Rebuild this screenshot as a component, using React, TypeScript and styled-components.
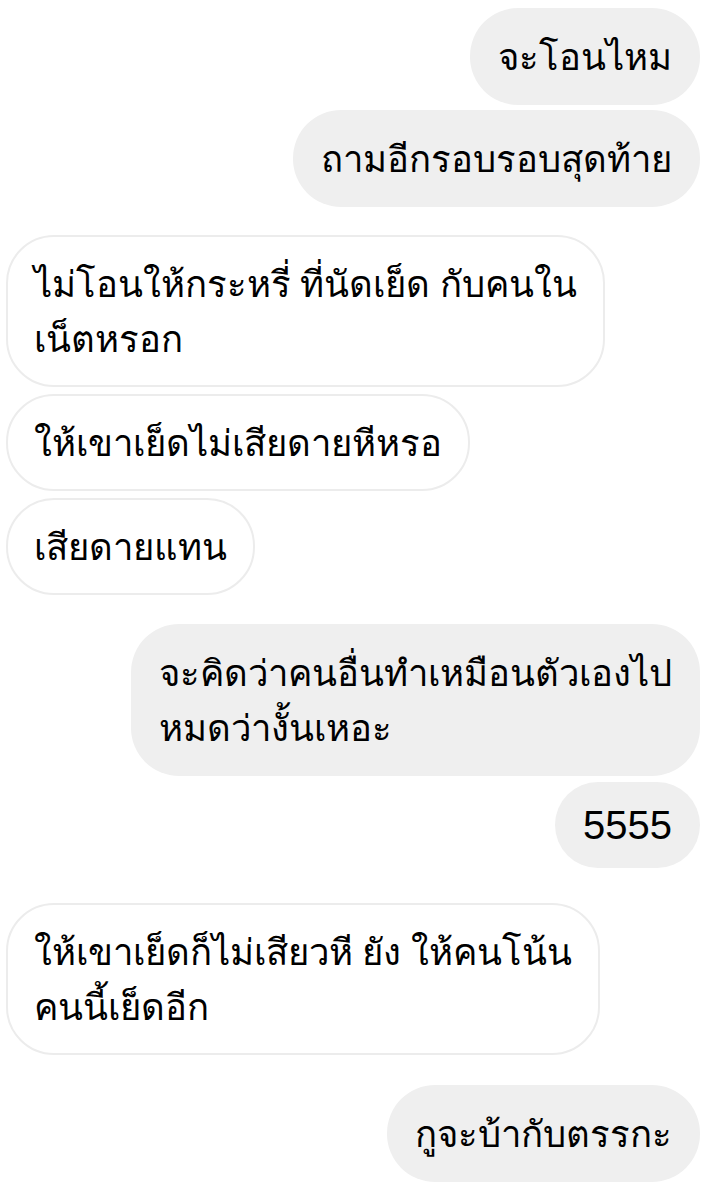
import React from "react";
import styled, { createGlobalStyle, css } from "styled-components";

const Global = createGlobalStyle`
  html, body { margin: 0; padding: 0; background: #ffffff; }
  body { font-family: "Noto Sans", "Liberation Sans", sans-serif; -webkit-font-smoothing: antialiased; }
`;

const Thread = styled.div`
  display: flex;
  flex-direction: column;
  padding: 8px 19px 0 6px;
  width: 719px;
  box-sizing: border-box;
`;

const Row = styled.div<{ $mine: boolean; $gap: number }>`
  display: flex;
  justify-content: ${(p) => (p.$mine ? "flex-end" : "flex-start")};
  margin-top: ${(p) => p.$gap}px;
`;

const Bubble = styled.div<{ $mine: boolean; $latin?: boolean }>`
  box-sizing: border-box;
  border-radius: 48px;
  padding: 21px 28px 21px 28px;
  font-size: 36.5px;
  line-height: 55px;
  color: #000;
  white-space: nowrap;
  font-family: "Noto Sans", "Liberation Sans", sans-serif;
  ${(p) =>
    p.$mine
      ? css`
          background: #efefef;
        `
      : css`
          background: #ffffff;
          border: 2px solid #ececec;
          padding: 19px 26px 19px 26px;
        `}
  ${(p) =>
    p.$latin &&
    css`
      font-family: "Liberation Sans", Arial, sans-serif;
      font-size: 40px;
      line-height: 44px;
      padding: 21px 28px;
    `}
`;

type Msg = { mine: boolean; gap: number; lines: string[]; latin?: boolean };

const messages: Msg[] = [
  { mine: true, gap: 0, lines: ["จะโอนไหม"] },
  { mine: true, gap: 5, lines: ["ถามอีกรอบรอบสุดท้าย"] },
  { mine: false, gap: 28, lines: ["ไม่โอนให้กระหรี่ ที่นัดเย็ด กับคนใน", "เน็ตหรอก"] },
  { mine: false, gap: 7, lines: ["ให้เขาเย็ดไม่เสียดายหีหรอ"] },
  { mine: false, gap: 7, lines: ["เสียดายแทน"] },
  { mine: true, gap: 29, lines: ["จะคิดว่าคนอื่นทำเหมือนตัวเองไป", "หมดว่างั้นเหอะ"] },
  { mine: true, gap: 6, lines: ["5555"], latin: true },
  { mine: false, gap: 35, lines: ["ให้เขาเย็ดก็ไม่เสียวหี ยัง ให้คนโน้น", "คนนี้เย็ดอีก"] },
  { mine: true, gap: 30, lines: ["กูจะบ้ากับตรรกะ"] },
];

export default function App() {
  return (
    <>
      <Global />
      <Thread>
        {messages.map((m, i) => (
          <Row key={i} $mine={m.mine} $gap={m.gap}>
            <Bubble $mine={m.mine} $latin={m.latin}>
              {m.lines.map((l, j) => (
                <React.Fragment key={j}>
                  {j > 0 && <br />}
                  {l}
                </React.Fragment>
              ))}
            </Bubble>
          </Row>
        ))}
      </Thread>
    </>
  );
}
